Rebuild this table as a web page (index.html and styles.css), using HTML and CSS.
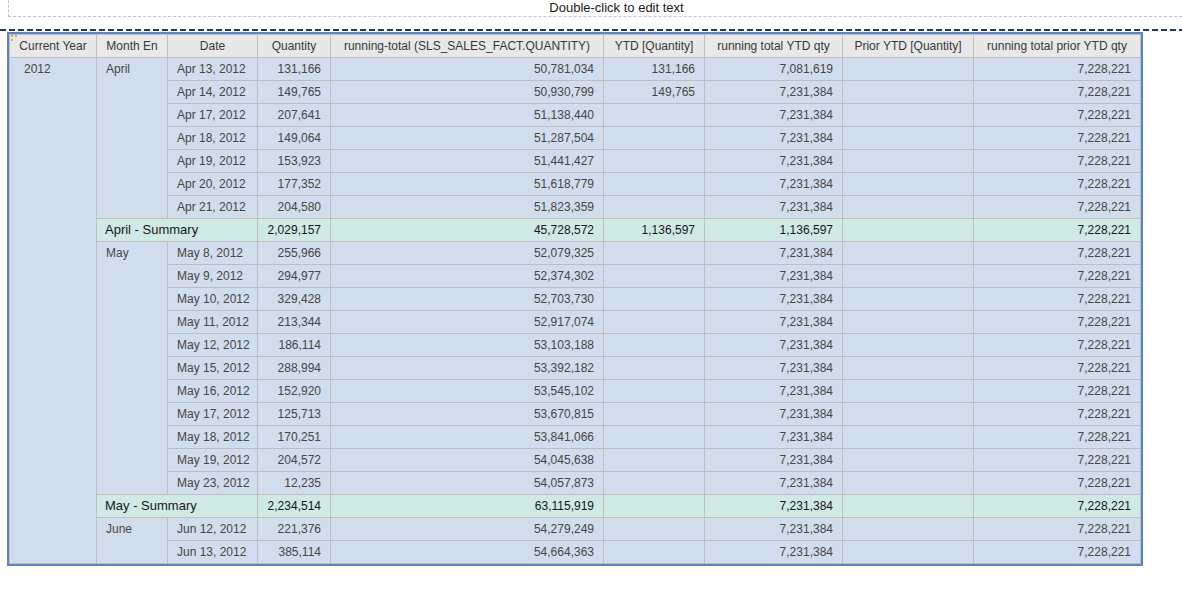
FILE: index.html
```html
<!DOCTYPE html>
<html>
<head>
<meta charset="utf-8">
<link rel="stylesheet" href="styles.css">
</head>
<body>
<div class="editbox"><span class="edittext">Double-click to edit text</span></div>
<div class="selline"></div>
<div class="frame">
<span class="handle h1"></span><span class="handle h2"></span><span class="handle h3"></span>
<table class="grid">
<colgroup>
<col class="c1"><col class="c2"><col class="c3"><col class="c4"><col class="c5"><col class="c6"><col class="c7"><col class="c8"><col class="c9">
</colgroup>
<thead>
<tr class="head">
<th>Current Year</th><th>Month En</th><th>Date</th><th>Quantity</th><th>running-total (SLS_SALES_FACT.QUANTITY)</th><th>YTD [Quantity]</th><th>running total YTD qty</th><th>Prior YTD [Quantity]</th><th>running total prior YTD qty</th>
</tr>
</thead>
<tbody>
<tr><td class="year" rowspan="22">2012</td><td class="month" rowspan="7">April</td><td class="date">Apr 13, 2012</td><td class="num">131,166</td><td class="num">50,781,034</td><td class="num">131,166</td><td class="num">7,081,619</td><td class="num"></td><td class="num">7,228,221</td></tr>
<tr><td class="date">Apr 14, 2012</td><td class="num">149,765</td><td class="num">50,930,799</td><td class="num">149,765</td><td class="num">7,231,384</td><td class="num"></td><td class="num">7,228,221</td></tr>
<tr><td class="date">Apr 17, 2012</td><td class="num">207,641</td><td class="num">51,138,440</td><td class="num"></td><td class="num">7,231,384</td><td class="num"></td><td class="num">7,228,221</td></tr>
<tr><td class="date">Apr 18, 2012</td><td class="num">149,064</td><td class="num">51,287,504</td><td class="num"></td><td class="num">7,231,384</td><td class="num"></td><td class="num">7,228,221</td></tr>
<tr><td class="date">Apr 19, 2012</td><td class="num">153,923</td><td class="num">51,441,427</td><td class="num"></td><td class="num">7,231,384</td><td class="num"></td><td class="num">7,228,221</td></tr>
<tr><td class="date">Apr 20, 2012</td><td class="num">177,352</td><td class="num">51,618,779</td><td class="num"></td><td class="num">7,231,384</td><td class="num"></td><td class="num">7,228,221</td></tr>
<tr><td class="date">Apr 21, 2012</td><td class="num">204,580</td><td class="num">51,823,359</td><td class="num"></td><td class="num">7,231,384</td><td class="num"></td><td class="num">7,228,221</td></tr>
<tr class="summary"><td class="label" colspan="2">April - Summary</td><td class="num">2,029,157</td><td class="num">45,728,572</td><td class="num">1,136,597</td><td class="num">1,136,597</td><td class="num"></td><td class="num">7,228,221</td></tr>
<tr><td class="month" rowspan="11">May</td><td class="date">May 8, 2012</td><td class="num">255,966</td><td class="num">52,079,325</td><td class="num"></td><td class="num">7,231,384</td><td class="num"></td><td class="num">7,228,221</td></tr>
<tr><td class="date">May 9, 2012</td><td class="num">294,977</td><td class="num">52,374,302</td><td class="num"></td><td class="num">7,231,384</td><td class="num"></td><td class="num">7,228,221</td></tr>
<tr><td class="date">May 10, 2012</td><td class="num">329,428</td><td class="num">52,703,730</td><td class="num"></td><td class="num">7,231,384</td><td class="num"></td><td class="num">7,228,221</td></tr>
<tr><td class="date">May 11, 2012</td><td class="num">213,344</td><td class="num">52,917,074</td><td class="num"></td><td class="num">7,231,384</td><td class="num"></td><td class="num">7,228,221</td></tr>
<tr><td class="date">May 12, 2012</td><td class="num">186,114</td><td class="num">53,103,188</td><td class="num"></td><td class="num">7,231,384</td><td class="num"></td><td class="num">7,228,221</td></tr>
<tr><td class="date">May 15, 2012</td><td class="num">288,994</td><td class="num">53,392,182</td><td class="num"></td><td class="num">7,231,384</td><td class="num"></td><td class="num">7,228,221</td></tr>
<tr><td class="date">May 16, 2012</td><td class="num">152,920</td><td class="num">53,545,102</td><td class="num"></td><td class="num">7,231,384</td><td class="num"></td><td class="num">7,228,221</td></tr>
<tr><td class="date">May 17, 2012</td><td class="num">125,713</td><td class="num">53,670,815</td><td class="num"></td><td class="num">7,231,384</td><td class="num"></td><td class="num">7,228,221</td></tr>
<tr><td class="date">May 18, 2012</td><td class="num">170,251</td><td class="num">53,841,066</td><td class="num"></td><td class="num">7,231,384</td><td class="num"></td><td class="num">7,228,221</td></tr>
<tr><td class="date">May 19, 2012</td><td class="num">204,572</td><td class="num">54,045,638</td><td class="num"></td><td class="num">7,231,384</td><td class="num"></td><td class="num">7,228,221</td></tr>
<tr><td class="date">May 23, 2012</td><td class="num">12,235</td><td class="num">54,057,873</td><td class="num"></td><td class="num">7,231,384</td><td class="num"></td><td class="num">7,228,221</td></tr>
<tr class="summary"><td class="label" colspan="2">May - Summary</td><td class="num">2,234,514</td><td class="num">63,115,919</td><td class="num"></td><td class="num">7,231,384</td><td class="num"></td><td class="num">7,228,221</td></tr>
<tr><td class="month" rowspan="2">June</td><td class="date">Jun 12, 2012</td><td class="num">221,376</td><td class="num">54,279,249</td><td class="num"></td><td class="num">7,231,384</td><td class="num"></td><td class="num">7,228,221</td></tr>
<tr><td class="date">Jun 13, 2012</td><td class="num">385,114</td><td class="num">54,664,363</td><td class="num"></td><td class="num">7,231,384</td><td class="num"></td><td class="num">7,228,221</td></tr>
</tbody>
</table>
</div>
</body>
</html>
```
FILE: styles.css
```css
html, body {
  margin: 0;
  padding: 0;
  background: #ffffff;
  font-family: "Liberation Sans", Arial, sans-serif;
  overflow: hidden;
}

.editbox {
  margin-left: 8px;
  height: 17px;
  border-left: 1px dashed #c4c4c4;
  border-bottom: 1px dashed #c4c4c4;
  box-sizing: border-box;
  padding-left: 42px;
  padding-top: 1px;
  text-align: center;
  font-size: 13px;
  line-height: 14px;
  color: #1a1a1a;
}

.selline {
  margin-top: 12px;
  height: 2px;
  background: repeating-linear-gradient(to right, #24395a 0, #24395a 6px, transparent 6px, transparent 9px);
}

.frame {
  position: relative;
  display: inline-block;
  margin-top: 1px;
  margin-left: 7px;
  border: 2px solid #5a84c2;
  vertical-align: top;
}

.handle {
  position: absolute;
  width: 2px;
  height: 2px;
  background: #f2a23a;
}
.h1 { left: 2px; top: 1px; }
.h2 { left: 2px; top: 5px; }
.h3 { left: 6px; top: 1px; }

.grid {
  border-collapse: collapse;
  table-layout: fixed;
  width: 1131px;
  font-size: 12px;
  color: #464646;
}

.c1 { width: 87px; }
.c2 { width: 71px; }
.c3 { width: 90px; }
.c4 { width: 73px; }
.c5 { width: 273px; }
.c6 { width: 101px; }
.c7 { width: 138px; }
.c8 { width: 131px; }
.c9 { width: 167px; }

.grid th, .grid td {
  border: 1px solid #bdbdbd;
  height: 22px;
  padding: 0 9px;
  line-height: 22px;
  white-space: nowrap;
  overflow: hidden;
  box-sizing: content-box;
}

.grid th {
  background: #e8e8e8;
  font-weight: normal;
  text-align: center;
  color: #383838;
  padding: 0 4px;
}

.grid td {
  background: #d1ddec;
}

.grid td.year {
  vertical-align: top;
  padding-left: 14px;
}

.grid td.month {
  vertical-align: top;
}

.grid td.num {
  text-align: right;
  padding: 0 9px 0 4px;
}

.summary td {
  background: #cfeae4;
  color: #161616;
}

.summary td.label {
  font-size: 13px;
  padding-left: 8px;
}
```
